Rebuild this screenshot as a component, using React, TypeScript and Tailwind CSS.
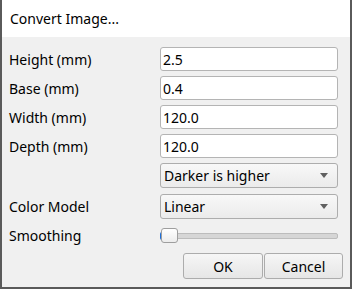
const font = { fontFamily: '"Noto Sans", "Open Sans", sans-serif' }

function Field({ label, value }: { label: string; value: string }) {
  return (
    <div className="flex h-[24px] items-center">
      <div className="w-[151px] text-[14px] text-black">{label}</div>
      <div className="flex h-full w-[178px] items-center rounded-[3px] border border-[#b4b4b4] bg-white pl-[2px] text-[14px] text-black">
        {value}
      </div>
    </div>
  )
}

function Combo({ label, value }: { label: string; value: string }) {
  return (
    <div className="flex h-[25px] items-center">
      <div className="w-[151px] text-[14px] text-black">{label}</div>
      <div className="flex h-full w-[178px] items-center justify-between rounded-[3px] border border-[#adadad] bg-gradient-to-b from-[#f8f8f8] to-[#ebebeb] pl-[3px] pr-[9px] text-[14px] text-black">
        <span>{value}</span>
        <span className="h-0 w-0 border-x-[4.5px] border-t-[5px] border-x-transparent border-t-[#606060]" />
      </div>
    </div>
  )
}

export default function App() {
  return (
    <div className="flex h-[289px] w-[352px] flex-col border-x-2 border-b-2 border-[#5a5a5a] bg-[#f0f0f0]" style={font}>
      {/* TITLE */}
      <div className="flex h-[37px] shrink-0 items-center bg-white pl-[8px] text-[14px] text-black">Convert Image...</div>

      {/* FORM */}
      <div className="flex flex-col pl-[7px] pt-[10px]">
        <Field label="Height (mm)" value="2.5" />
        <div className="mt-[5px]"><Field label="Base (mm)" value="0.4" /></div>
        <div className="mt-[5px]"><Field label="Width (mm)" value="120.0" /></div>
        <div className="mt-[5px]"><Field label="Depth (mm)" value="120.0" /></div>
        <div className="mt-[5px]"><Combo label="" value="Darker is higher" /></div>
        <div className="mt-[6px]"><Combo label="Color Model" value="Linear" /></div>

        <div className="mt-[5px] flex h-[23px] items-center">
          <div className="w-[151px] text-[14px] text-black">Smoothing</div>
          <div className="relative flex h-full w-[178px] items-center">
            <div className="h-[6px] w-full rounded-[2px] border border-[#bcbcbc] bg-[#d6d6d6]" />
            <div className="absolute left-0 top-1/2 h-[8px] w-[3px] -translate-y-1/2 rounded-l-[2px] bg-[#1f6fd8]" />
            <div className="absolute left-[1px] top-[4px] h-[15px] w-[17px] rounded-[3px] border border-[#9e9e9e] bg-gradient-to-b from-white to-[#ececec]" />
          </div>
        </div>

        <div className="mt-[6px] flex justify-end pr-[7px]">
          <button className="h-[26px] w-[80px] rounded-[3px] border border-[#acacac] bg-gradient-to-b from-[#f6f6f6] to-[#e6e6e6] text-[14px] text-black">OK</button>
          <button className="ml-[1px] h-[26px] w-[79px] rounded-[3px] border border-[#acacac] bg-gradient-to-b from-[#f6f6f6] to-[#e6e6e6] text-[14px] text-black">Cancel</button>
        </div>
      </div>
    </div>
  )
}
